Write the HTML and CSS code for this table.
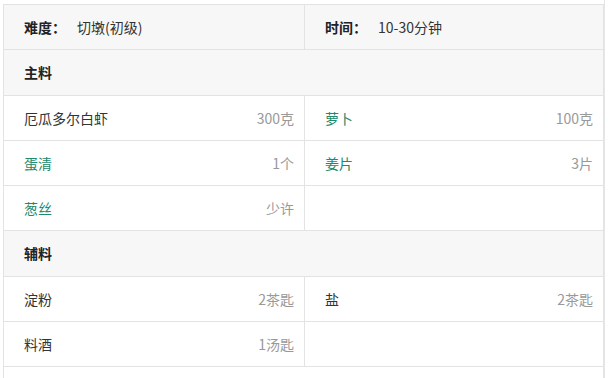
FILE: index.html
```html
<!DOCTYPE html>
<html lang="zh-CN">
<head>
<meta charset="utf-8">
<title>食材</title>
<link rel="stylesheet" href="styles.css">
</head>
<body>
<div class="page">
  <div class="table">
    <div class="row head">
      <div class="cell"><b class="label">难度：</b><span class="val">切墩(初级)</span></div>
      <div class="cell"><b class="label">时间：</b><span class="val">10-30分钟</span></div>
    </div>
    <div class="row section"><div class="cell full"><b>主料</b></div></div>
    <div class="row">
      <div class="cell"><span class="name">厄瓜多尔白虾</span><span class="amt">300克</span></div>
      <div class="cell"><a class="name link">萝卜</a><span class="amt">100克</span></div>
    </div>
    <div class="row">
      <div class="cell"><a class="name link">蛋清</a><span class="amt">1个</span></div>
      <div class="cell"><a class="name link">姜片</a><span class="amt">3片</span></div>
    </div>
    <div class="row">
      <div class="cell"><a class="name link">葱丝</a><span class="amt">少许</span></div>
      <div class="cell"></div>
    </div>
    <div class="row section"><div class="cell full"><b>辅料</b></div></div>
    <div class="row">
      <div class="cell"><span class="name">淀粉</span><span class="amt">2茶匙</span></div>
      <div class="cell"><span class="name">盐</span><span class="amt">2茶匙</span></div>
    </div>
    <div class="row">
      <div class="cell"><span class="name">料酒</span><span class="amt">1汤匙</span></div>
      <div class="cell"></div>
    </div>
  </div>
</div>
</body>
</html>
```
FILE: styles.css
```css
html, body {
  margin: 0;
  padding: 0;
  background: #fff;
}
body {
  font-family: "Noto Sans CJK SC", "Microsoft YaHei", sans-serif;
  font-size: 14px;
  color: #333;
  overflow: hidden;
}
.page {
  width: 605px;
  height: 378px;
  padding: 4px 0 0 3px;
  box-sizing: border-box;
  border-right: 1px solid #e6e6e6;
  overflow: hidden;
}
.table {
  width: 601px;
  height: 374px;
  border-top: 1px solid #e3e3e3;
  border-left: 1px solid #e3e3e3;
  border-right: 1px solid #e3e3e3;
  box-sizing: border-box;
}
.row {
  display: grid;
  grid-template-columns: 300px 299px;
  height: 44.25px;
  border-bottom: 1px solid #e3e3e3;
}
.row.head, .row.section {
  background: #f7f7f7;
}
.row.section {
  grid-template-columns: 599px;
}
.cell {
  display: flex;
  align-items: center;
  justify-content: space-between;
  padding: 0 10px 0 20px;
  line-height: 20px;
}
.cell + .cell {
  border-left: 1px solid #e3e3e3;
}
.head .cell {
  justify-content: flex-start;
}
.label {
  font-weight: bold;
  color: #222;
  margin-right: 11px;
}
.val {
  color: #333;
}
.section b {
  font-weight: bold;
  color: #222;
}
.name {
  color: #333;
}
.link {
  color: #23896d;
  text-decoration: none;
}
.amt {
  color: #999;
}
```
